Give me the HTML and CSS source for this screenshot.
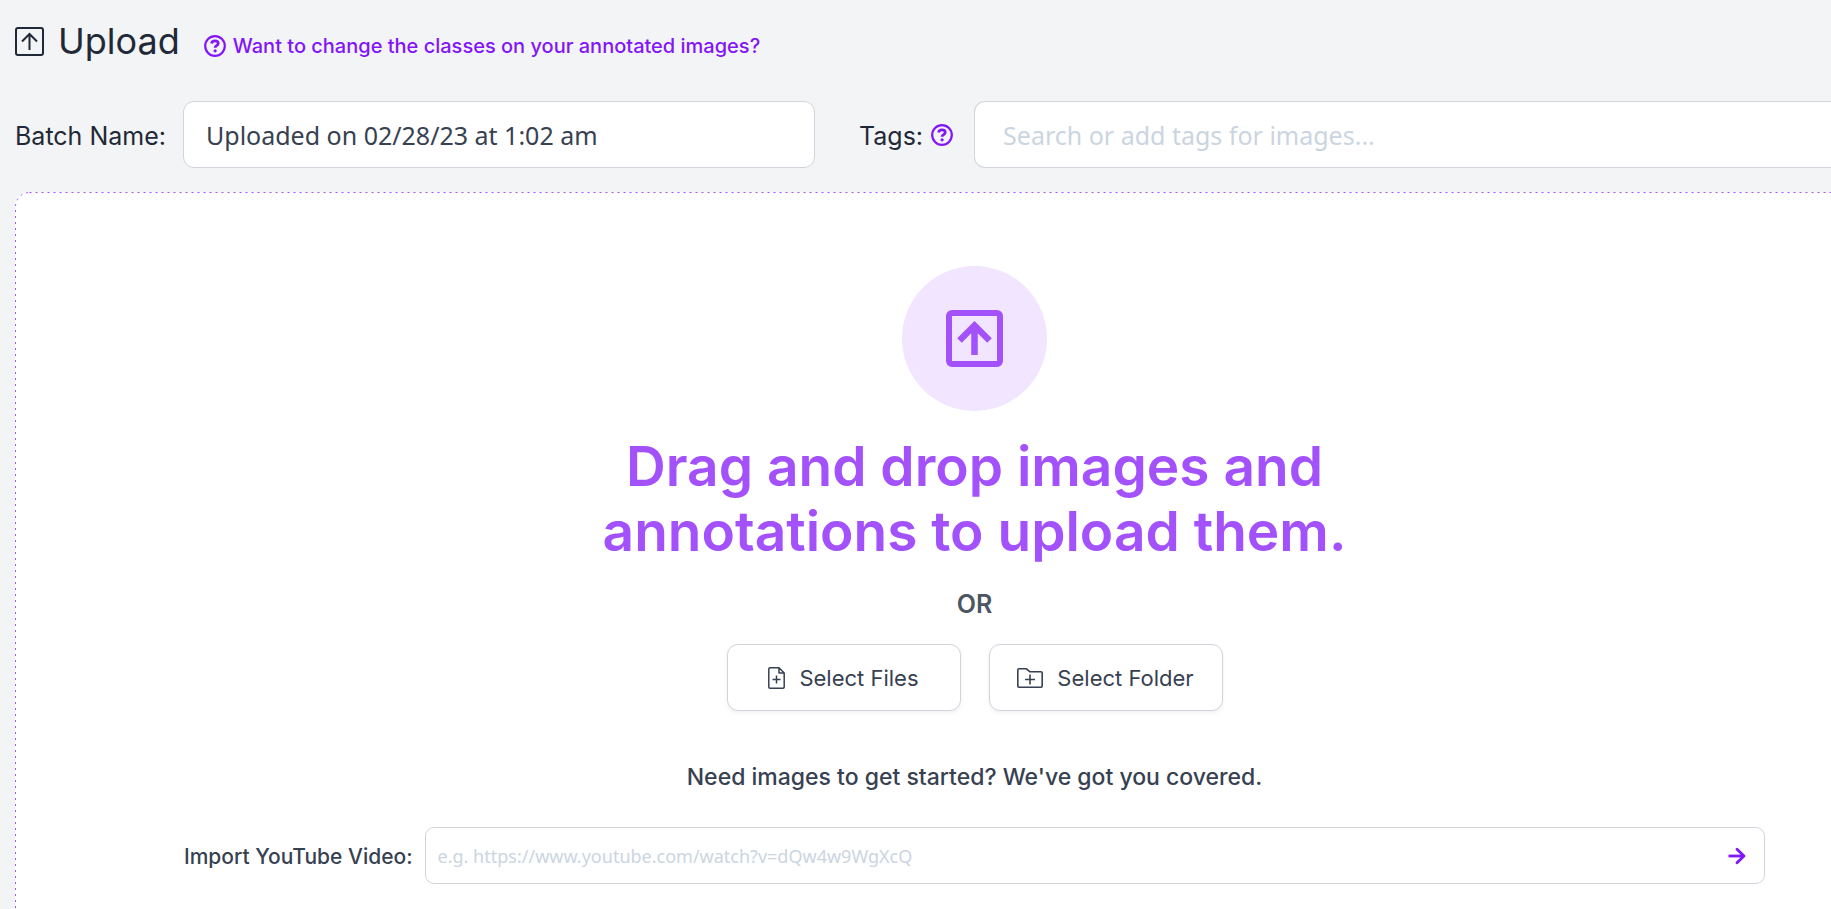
FILE: index.html
```html
<!DOCTYPE html>
<html lang="en">
<head>
<meta charset="utf-8">
<title>Upload</title>
<link rel="stylesheet" href="styles.css">
</head>
<body>
<main class="page">
  <header class="header">
    <h1 class="title">
      <svg class="title-icon" viewBox="0 0 29 29" fill="none" stroke="currentColor" stroke-width="2" aria-hidden="true"><rect x="1" y="1" width="27" height="27" rx="2"/><path d="M14.500 23V7M7 14.500l7.500-7.500 7.500 7.500"/></svg>
      Upload
    </h1>
    <a class="help-link" href="#">
      <svg class="help-icon" viewBox="0 0 22 22" fill="none" stroke="currentColor" aria-hidden="true"><circle cx="11" cy="11" r="9.800" stroke-width="2.200"/><path d="M7.600 8.500c.3-1.700 1.600-2.600 3.400-2.600 1.900 0 3.200 1 3.200 2.500 0 2.300-3.100 2.100-3.100 4.300" stroke-width="2.800"/><circle cx="11.100" cy="15.800" r="1.600" fill="currentColor" stroke="none"/></svg>
      Want to change the classes on your annotated images?
    </a>
  </header>

  <form class="fields">
    <div class="field batch">
      <label class="field-label" for="batch">Batch Name:</label>
      <input class="input" id="batch" type="text" value="Uploaded on 02/28/23 at 1:02 am">
    </div>
    <div class="field tags">
      <label class="field-label" for="tags">Tags:</label>
      <a class="tags-help" href="#" aria-label="About tags"><svg class="help-icon" viewBox="0 0 22 22" fill="none" stroke="currentColor" aria-hidden="true"><circle cx="11" cy="11" r="9.800" stroke-width="2.200"/><path d="M7.600 8.500c.3-1.700 1.600-2.600 3.400-2.600 1.900 0 3.200 1 3.200 2.500 0 2.300-3.100 2.100-3.100 4.300" stroke-width="2.800"/><circle cx="11.100" cy="15.800" r="1.600" fill="currentColor" stroke="none"/></svg></a>
      <input class="input input-tags" id="tags" type="text" placeholder="Search or add tags for images...">
    </div>
  </form>

  <section class="dropzone">
    <svg class="outline" aria-hidden="true"><rect class="outline-rect" x="0.500" y="0.500" rx="14"/></svg>
    <div class="badge">
      <svg class="badge-icon" viewBox="0 0 57 57" fill="none" stroke="currentColor" stroke-width="6" aria-hidden="true"><rect x="3" y="3" width="51" height="51" rx="3"/><path d="M28.500 45V15.500M13.500 30.500l15-15 15 15" stroke-width="6.500"/></svg>
    </div>
    <h2 class="headline">Drag and drop images and<br>annotations to upload them.</h2>
    <p class="or">OR</p>
    <div class="actions">
      <button class="button" type="button">
        <svg class="file-icon" viewBox="0 0 17 22" fill="none" stroke="currentColor" stroke-width="1.500" stroke-linejoin="round" aria-hidden="true"><path d="M11 .8H2Q.8.800.8 2v18q0 1.200 1.200 1.200h13q1.200 0 1.200-1.200V6zv5.200h5.200M8.500 8.500v8M4.500 12.500h8"/></svg>
        Select Files
      </button>
      <button class="button" type="button">
        <svg class="folder-icon" viewBox="0 0 26 20" fill="none" stroke="currentColor" stroke-width="1.600" stroke-linejoin="round" aria-hidden="true"><path d="M2 .8h7.500l3.500 3h11q1.200 0 1.200 1.200v13q0 1.200-1.200 1.200H2Q.8 19.200.8 18V2Q.8.800 2 .8zM13 6.500v10M8 11.500h10"/></svg>
        Select Folder
      </button>
    </div>
    <p class="prompt">Need images to get started? We've got you covered.</p>
    <form class="import">
      <label class="import-label" for="video">Import YouTube Video:</label>
      <div class="import-box">
        <input class="import-input" id="video" type="text" placeholder="e.g. https://www.youtube.com/watch?v=dQw4w9WgXcQ">
        <button class="import-go" type="button" aria-label="Import"><svg class="go-icon" viewBox="0 0 18 18" fill="none" stroke="currentColor" stroke-width="2.800" stroke-linecap="round" aria-hidden="true"><path d="M.5 9H16" stroke-linecap="butt"/><path d="M9 2.200L16 9l-7 6.800" stroke-linejoin="round"/></svg></button>
      </div>
    </form>
  </section>
</main>
</body>
</html>
```
FILE: styles.css
```css
* {
  box-sizing: border-box;
}

body {
  margin: 0;
  background: #f3f4f6;
  color: #1f2937;
  font-family: Inter, "Liberation Sans", sans-serif;
}

h1,
h2,
p {
  margin: 0;
}

svg {
  display: block;
  flex: none;
}

.page {
  display: flex;
  flex-direction: column;
  min-height: 100vh;
  padding: 16px 0 0 15px;
}

.header {
  display: flex;
  align-items: center;
  gap: 24px;
}

.title {
  display: flex;
  align-items: center;
  gap: 14px;
  font-size: 36px;
  line-height: 50px;
  font-weight: 400;
}

.title-icon {
  width: 29px;
  height: 29px;
}

.help-link {
  display: flex;
  align-items: center;
  gap: 7px;
  padding-top: 9px;
  color: #8315f9;
  font-size: 20px;
  line-height: 28px;
  font-weight: 500;
  text-decoration: none;
}

.help-icon {
  width: 22px;
  height: 22px;
}

.fields {
  display: flex;
  gap: 44px;
  margin-top: 35px;
}

.field {
  display: flex;
  align-items: center;
}

.batch {
  flex: 0 0 800px;
  gap: 17px;
}

.tags {
  flex: 1;
}

.field-label {
  padding-top: 2px;
  font-size: 25px;
  line-height: 36px;
  white-space: nowrap;
}

.tags-help {
  margin: 0 21px 0 8px;
  color: #8315f9;
}

.input {
  flex: 1;
  min-width: 0;
  height: 67px;
  padding: 0 22px;
  border: 1px solid #d1d5db;
  border-radius: 11px;
  background: #fff;
  color: #374151;
  font-family: "Noto Sans", sans-serif;
  font-size: 25px;
}

/* Runs flush to the right edge of the window. */
.input-tags {
  padding: 0 28px;
  border-right: 0;
  border-radius: 11px 0 0 11px;
}

.input::placeholder,
.import-input::placeholder {
  color: #cbd5e1;
  opacity: 1;
}

.dropzone {
  position: relative;
  flex: 1;
  display: flex;
  flex-direction: column;
  align-items: center;
  margin-top: 24px;
  padding: 74px 66px 25px 169px;
  border-radius: 14px 0 0 0;
  background: #fff;
}

/* Dashed outline on the top and left sides only. */
.outline {
  position: absolute;
  inset: 0;
  width: 100%;
  height: 100%;
  overflow: hidden;
  pointer-events: none;
}

.outline-rect {
  width: calc(100% + 20px);
  height: calc(100% + 20px);
  fill: none;
  stroke: #a351fb;
  stroke-width: 1px;
  stroke-dasharray: 2 4;
}

.badge {
  display: grid;
  place-items: center;
  width: 145px;
  height: 145px;
  border-radius: 50%;
  background: #f1e5ff;
  color: #a351fb;
}

.badge-icon {
  width: 57px;
  height: 57px;
}

.headline {
  margin-top: 23px;
  color: #a351fb;
  font-size: 55px;
  line-height: 65px;
  font-weight: 600;
  text-align: center;
}

.or {
  margin-top: 22px;
  color: #4b5563;
  font-size: 25px;
  line-height: 36px;
  font-weight: 600;
}

.actions {
  display: flex;
  gap: 28px;
  margin-top: 22px;
}

.button {
  display: flex;
  align-items: center;
  justify-content: center;
  gap: 14px;
  width: 234px;
  height: 67px;
  padding: 0;
  border: 1px solid #d1d5db;
  border-radius: 11px;
  background: #fff;
  box-shadow: 0 2px 4px rgba(0, 0, 0, 0.06);
  color: #374151;
  font-family: inherit;
  font-size: 22px;
}

.file-icon {
  width: 17px;
  height: 22px;
}

.folder-icon {
  width: 26px;
  height: 20px;
}

.prompt {
  margin-top: 50px;
  color: #374151;
  font-size: 23px;
  line-height: 32px;
  font-weight: 500;
}

.import {
  display: flex;
  align-items: center;
  gap: 12px;
  align-self: stretch;
  margin-top: 34px;
}

.import-label {
  padding-top: 2px;
  color: #374151;
  font-size: 21px;
  line-height: 28px;
  font-weight: 500;
  white-space: nowrap;
}

.import-box {
  display: flex;
  align-items: center;
  flex: 1;
  height: 57px;
  padding: 0 18px 0 12px;
  border: 1px solid #d1d5db;
  border-radius: 9px;
  background: #fff;
}

.import-input {
  flex: 1;
  min-width: 0;
  padding: 0;
  border: 0;
  outline: 0;
  background: none;
  font-family: "Noto Sans", sans-serif;
  font-size: 18px;
}

.import-go {
  padding: 0;
  border: 0;
  background: none;
  color: #8315f9;
}

.go-icon {
  width: 18px;
  height: 18px;
}
```
